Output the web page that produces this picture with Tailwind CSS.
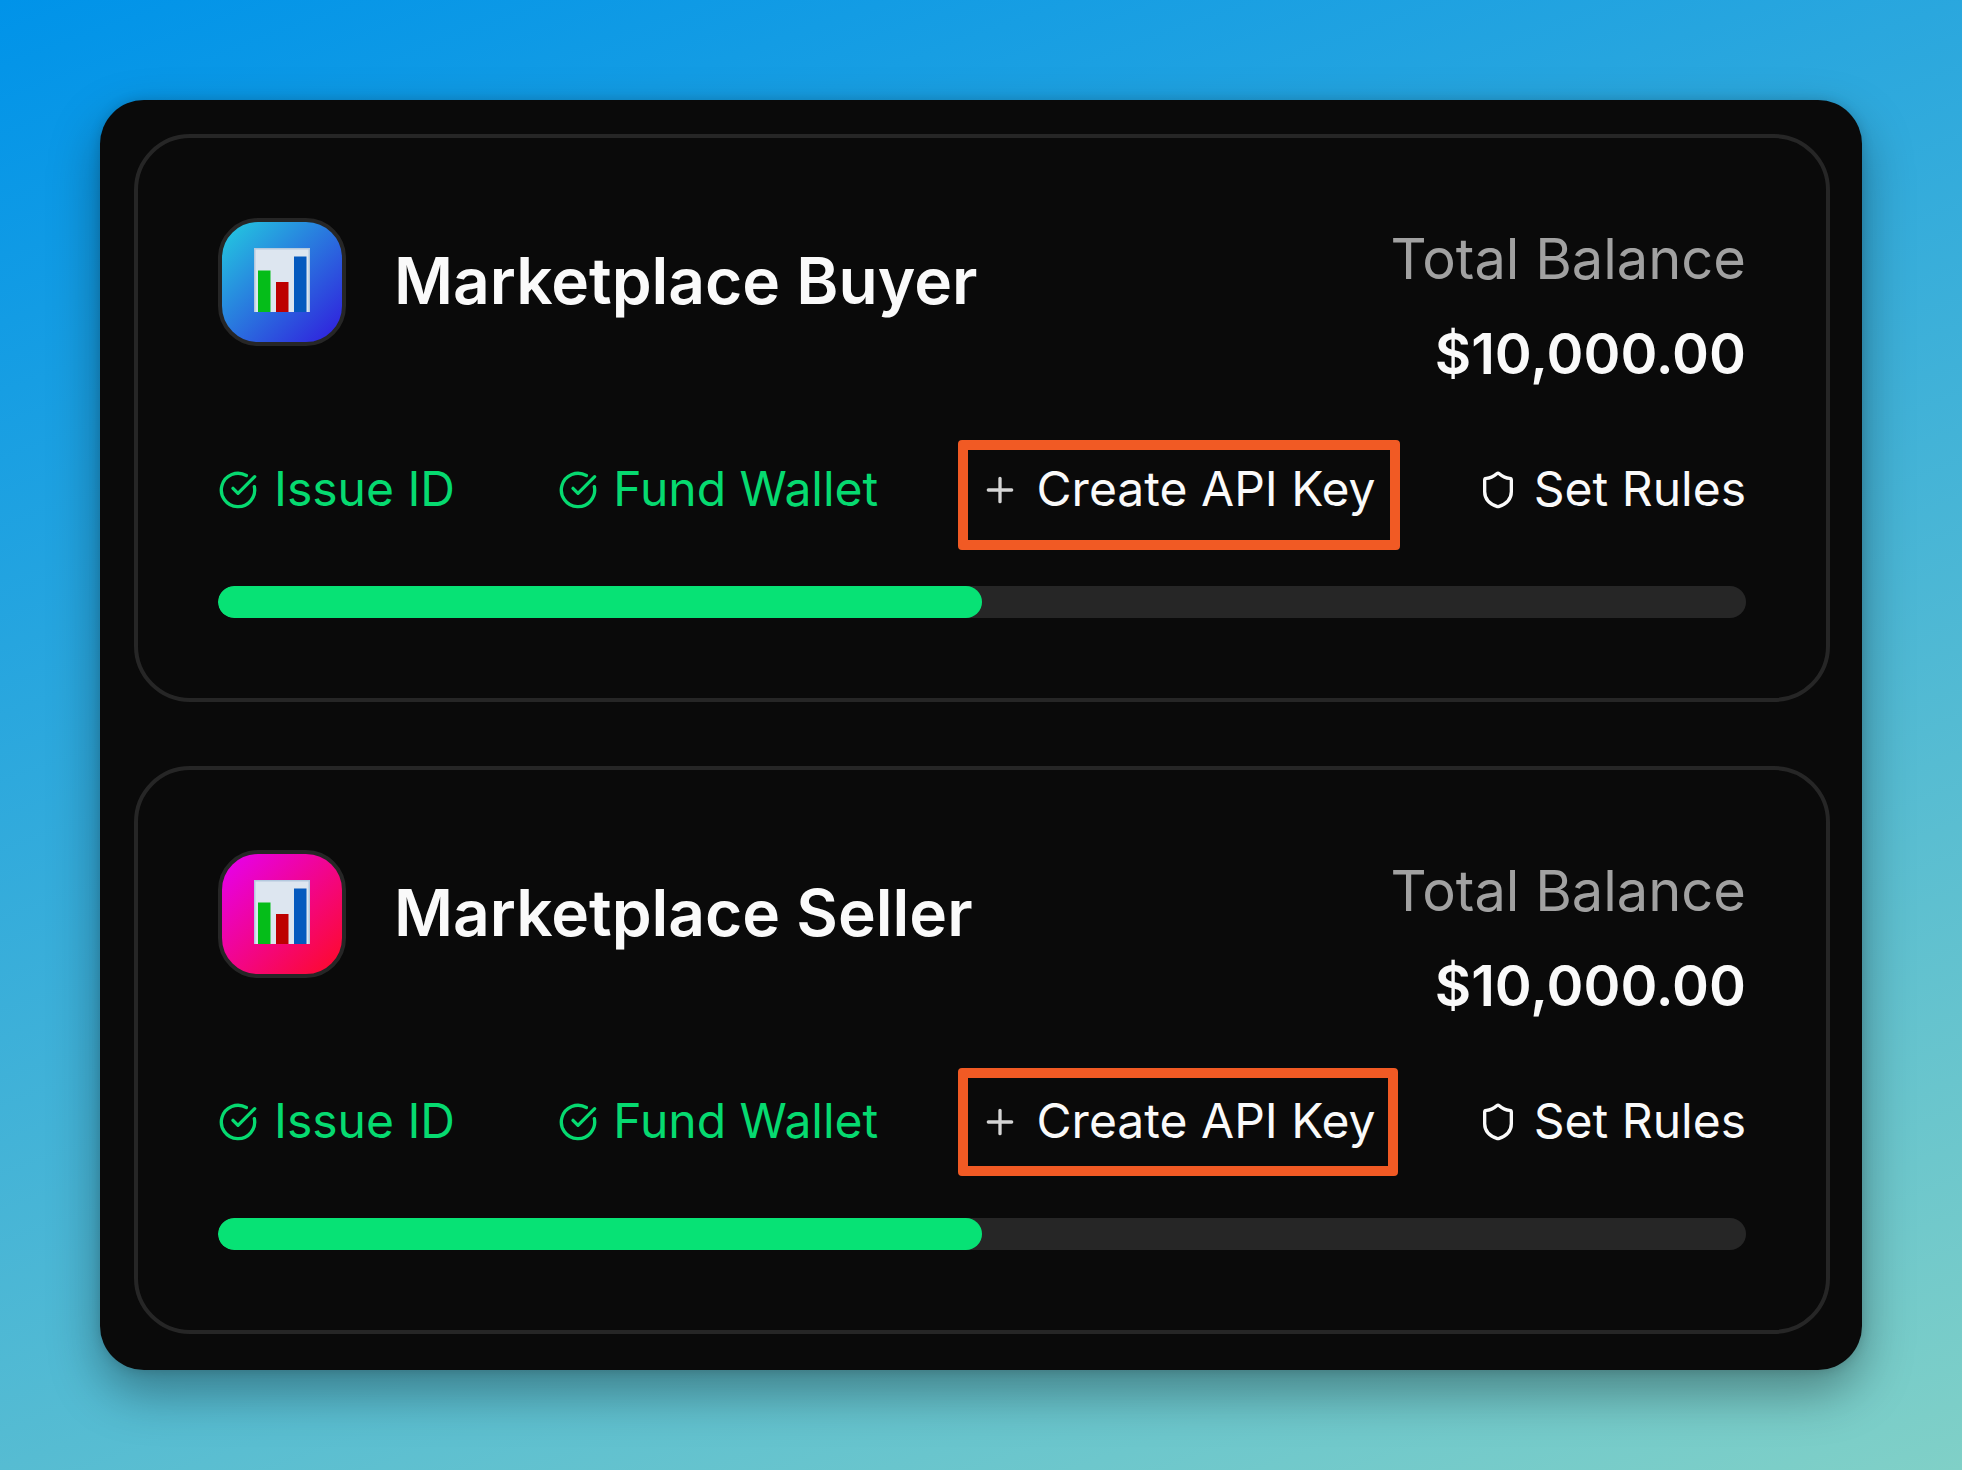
<!DOCTYPE html>
<html lang="en">
<head>
<meta charset="utf-8">
<title>Wallets</title>
<script src="https://cdn.jsdelivr.net/npm/@tailwindcss/browser@4"></script>
</head>
<body class="h-[1470px] w-[1962px] overflow-hidden bg-[linear-gradient(160deg,#0093e9_0%,#80d0c7_100%)] p-[100px] font-['Inter',sans-serif] text-neutral-50 [font-optical-sizing:none]">
<svg class="hidden">
  <symbol id="check" viewBox="0 0 24 24"><path d="M21.801 10A10 10 0 1 1 17 3.335"/><path d="m9 11 3 3L22 4"/></symbol>
  <symbol id="plus" viewBox="0 0 24 24"><path d="M5 12h14M12 5v14"/></symbol>
  <symbol id="shield" viewBox="0 0 24 24"><path d="M20 13c0 5-3.5 7.5-7.66 8.95a1 1 0 0 1-.67-.01C7.5 20.5 4 18 4 13V6a1 1 0 0 1 1-1c2 0 4.5-1.2 6.24-2.72a1.17 1.17 0 0 1 1.52 0C14.51 3.81 17 5 19 5a1 1 0 0 1 1 1z"/></symbol>
  <symbol id="chart" viewBox="0 0 56 64">
    <rect width="56" height="64" fill="#b4c9de"/><rect x="1.5" y="1.5" width="53" height="62.5" fill="#dde6f0"/>
    <rect x="4" y="22.500" width="12.500" height="41.500" fill="#05bd19"/>
    <rect x="22" y="34" width="12.500" height="30" fill="#bd0000"/>
    <rect x="40" y="8.500" width="12.500" height="55.500" fill="#0559be"/>
  </symbol>
</svg>
<main class="flex h-[1270px] flex-col gap-16 rounded-[44px] bg-neutral-950 py-[34px] pr-8 pl-[34px] shadow-[0_22px_50px_rgba(0,0,0,0.35),0_0_12px_rgba(0,0,0,0.15)]">
  <section class="flex h-[568px] flex-col gap-16 rounded-[56px] border-4 border-neutral-800 p-20">
    <header class="flex items-start justify-between">
      <div class="flex items-center gap-12">
        <div class="flex size-32 items-center justify-center rounded-[40px] border-4 border-neutral-800 bg-[linear-gradient(135deg,#22d3e0,#3114dd)] bg-origin-border">
          <svg class="mb-1 h-16 w-14"><use href="#chart"/></svg>
        </div>
        <h2 class="pb-0.5 text-[64px] leading-[96px] font-semibold">Marketplace Buyer</h2>
      </div>
      <div class="flex flex-col items-end gap-[14px] text-[56px] leading-[80px]">
        <p class="leading-[82px] text-[#a1a1a1]">Total Balance</p>
        <p class="font-semibold">$10,000.00</p>
      </div>
    </header>
    <div class="flex h-16 items-center justify-between text-5xl leading-[62px]">
      <div class="flex items-center gap-4 text-[#06da70]"><svg class="size-10 fill-none stroke-current stroke-2" stroke-linecap="round" stroke-linejoin="round"><use href="#check"/></svg><span class="pb-0.5">Issue ID</span></div>
      <div class="flex items-center gap-4 text-[#06da70]"><svg class="-mr-px ml-px size-10 fill-none stroke-current stroke-2" stroke-linecap="round" stroke-linejoin="round"><use href="#check"/></svg><span class="pb-0.5">Fund Wallet</span></div>
      <div class="relative flex items-center gap-4"><svg class="mr-px -ml-px size-10 fill-none stroke-neutral-300 stroke-2" stroke-linecap="round" stroke-linejoin="round"><use href="#plus"/></svg><span class="pb-0.5">Create API Key</span>
        <div class="absolute -top-[18px] -left-[23px] h-[110px] w-[442px] rounded-[4px] border-10 border-[#f15a24]"></div>
      </div>
      <div class="flex items-center gap-4"><svg class="size-10 fill-none stroke-current stroke-2" stroke-linecap="round" stroke-linejoin="round"><use href="#shield"/></svg><span class="pb-0.5">Set Rules</span></div>
    </div>
    <div class="h-8 overflow-hidden rounded-full bg-neutral-800"><div class="h-full w-1/2 rounded-full bg-[#07e275]"></div></div>
  </section>
  <section class="flex h-[568px] flex-col gap-16 rounded-[56px] border-4 border-neutral-800 p-20">
    <header class="flex items-start justify-between">
      <div class="flex items-center gap-12">
        <div class="flex size-32 items-center justify-center rounded-[40px] border-4 border-neutral-800 bg-[linear-gradient(135deg,#e400fa,#ff0a1e)] bg-origin-border">
          <svg class="mb-1 h-16 w-14"><use href="#chart"/></svg>
        </div>
        <h2 class="pb-0.5 text-[64px] leading-[96px] font-semibold">Marketplace Seller</h2>
      </div>
      <div class="flex flex-col items-end gap-[14px] text-[56px] leading-[80px]">
        <p class="leading-[82px] text-[#a1a1a1]">Total Balance</p>
        <p class="font-semibold">$10,000.00</p>
      </div>
    </header>
    <div class="flex h-16 items-center justify-between text-5xl leading-[62px]">
      <div class="flex items-center gap-4 text-[#06da70]"><svg class="size-10 fill-none stroke-current stroke-2" stroke-linecap="round" stroke-linejoin="round"><use href="#check"/></svg><span class="pb-0.5">Issue ID</span></div>
      <div class="flex items-center gap-4 text-[#06da70]"><svg class="-mr-px ml-px size-10 fill-none stroke-current stroke-2" stroke-linecap="round" stroke-linejoin="round"><use href="#check"/></svg><span class="pb-0.5">Fund Wallet</span></div>
      <div class="relative flex items-center gap-4"><svg class="mr-px -ml-px size-10 fill-none stroke-neutral-300 stroke-2" stroke-linecap="round" stroke-linejoin="round"><use href="#plus"/></svg><span class="pb-0.5">Create API Key</span>
        <div class="absolute -top-[22px] -left-[23px] h-[108px] w-[440px] rounded-[4px] border-10 border-[#f15a24]"></div>
      </div>
      <div class="flex items-center gap-4"><svg class="size-10 fill-none stroke-current stroke-2" stroke-linecap="round" stroke-linejoin="round"><use href="#shield"/></svg><span class="pb-0.5">Set Rules</span></div>
    </div>
    <div class="h-8 overflow-hidden rounded-full bg-neutral-800"><div class="h-full w-1/2 rounded-full bg-[#07e275]"></div></div>
  </section>
</main>
</body>
</html>
